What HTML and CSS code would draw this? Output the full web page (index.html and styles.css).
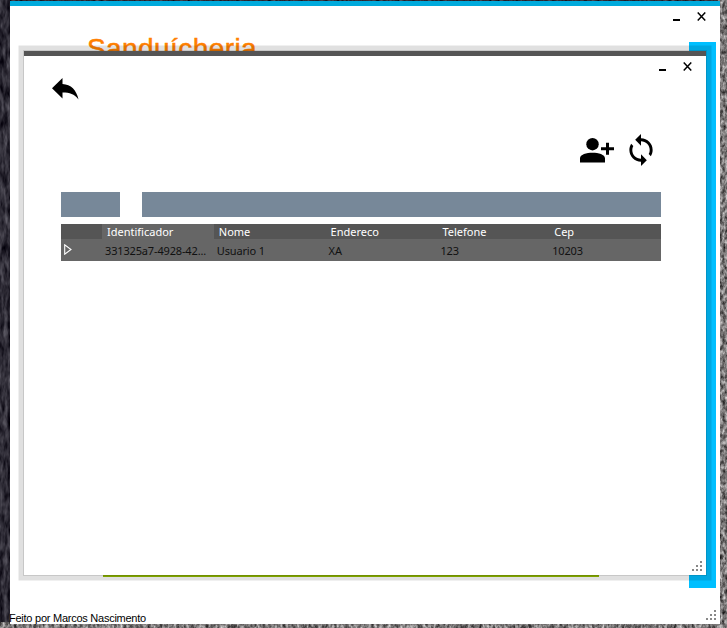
FILE: index.html
```html
<!DOCTYPE html>
<html lang="pt-BR">
<head>
<meta charset="utf-8">
<title>Sanduícheria</title>
<link rel="stylesheet" href="styles.css">
</head>
<body>
<svg class="wallpaper" width="727" height="628" aria-hidden="true">
  <defs>
    <filter id="fur" x="0" y="0" width="100%" height="100%" color-interpolation-filters="sRGB">
      <feTurbulence type="fractalNoise" baseFrequency="0.35 0.2" numOctaves="3" seed="8"/>
      <feColorMatrix values="1 0 0 0 -.02  1 0 0 0 -.03  1 0 0 0 -.03  0 0 0 0 1"/>
    </filter>
    <filter id="dark" x="0" y="0" width="100%" height="100%" color-interpolation-filters="sRGB">
      <feTurbulence type="fractalNoise" baseFrequency="0.25 0.07" numOctaves="3" seed="4"/>
      <feColorMatrix values=".5 0 0 0 -.07  .5 0 0 0 -.08  .5 0 0 0 -.04  0 0 0 0 1"/>
    </filter>
  </defs>
  <rect width="727" height="628" fill="#33323b"/>
  <rect width="12" height="628" filter="url(#dark)"/>
  <rect width="727" height="2" filter="url(#dark)"/>
  <rect x="718" width="9" height="628" filter="url(#fur)"/>
  <rect y="622" width="727" height="6" filter="url(#fur)"/>
</svg>

<main class="window main-window">
  <div class="controls"><i class="minimize"></i><svg class="close" viewBox="0 0 10 10"><path d="M.8.5 9.2 9.5M9.2.5.8 9.5"/></svg></div>
  <h1>Sanduícheria</h1>
  <div class="accent-side"></div>
  <div class="accent-bottom"></div>
  <footer>Feito por Marcos Nascimento</footer>
  <svg class="grip" viewBox="0 0 10 10"><path d="M8 0h2v2H8zM4 4h2v2H4zM8 4h2v2H8zM0 8h2v2H0zM4 8h2v2H4zM8 8h2v2H8z"/></svg>
</main>

<section class="window dialog">
  <div class="controls"><i class="minimize"></i><svg class="close" viewBox="0 0 10 10"><path d="M.8.5 9.2 9.5M9.2.5.8 9.5"/></svg></div>
  <svg class="back" viewBox="0 0 27 22"><path d="M10.5 0v6C19 6.4 24.5 12 26.5 21.5 22 16 18 14.5 10.5 14.5v6L0 10.3z"/></svg>
  <div class="toolbar">
    <svg class="add-user" viewBox="0 0 34 25"><circle cx="12.5" cy="6.2" r="6.2"/><path d="M0 24.5V20.5C0 16.5 6.5 14.8 12.5 14.8S25 16.5 25 20.5v4zM26 4.7h3v4.6h5v3h-5v4.5h-3v-4.5h-5v-3h5z"/></svg>
    <svg class="sync" viewBox="1 1 22 22" preserveAspectRatio="none"><path d="M12 4V1L8 5l4 4V6c3.31 0 6 2.69 6 6 0 1.01-.25 1.97-.7 2.8l1.46 1.46C19.54 15.03 20 13.57 20 12c0-4.42-3.58-8-8-8zm0 14c-3.31 0-6-2.69-6-6 0-1.01.25-1.97.7-2.8L5.24 7.74C4.46 8.97 4 10.43 4 12c0 4.42 3.58 8 8 8v3l4-4-4-4v3z"/></svg>
  </div>
  <div class="filters"><div></div><div></div></div>
  <table>
    <thead><tr><th></th><th class="sorted">Identificador</th><th>Nome</th><th>Endereco</th><th>Telefone</th><th>Cep</th></tr></thead>
    <tbody><tr><td class="marker"><svg viewBox="0 0 8 11"><path d="M.7.8v9.4L7 5.5z"/></svg></td><td>331325a7-4928-42...</td><td>Usuario 1</td><td>XA</td><td>123</td><td>10203</td></tr></tbody>
  </table>
  <svg class="grip" viewBox="0 0 10 10"><path d="M8 0h2v2H8zM4 4h2v2H4zM8 4h2v2H8zM0 8h2v2H0zM4 8h2v2H4zM8 8h2v2H8z"/></svg>
</section>
</body>
</html>
```
FILE: styles.css
```css
* { box-sizing: border-box; }
html, body { margin: 0; width: 727px; height: 628px; overflow: hidden; }
body { position: relative; font-family: "Noto Sans", "Open Sans", sans-serif; }
svg { display: block; }
.wallpaper { position: absolute; inset: 0; }
.window { position: absolute; background: #fff; }
.main-window { left: 10px; top: 1px; width: 710px; height: 623px; border-top: 5px solid #00aadc; }
.dialog {
  left: 24px; top: 51px; width: 682px; height: 524px;
  border-top: 5px solid #555;
  box-shadow: 0 0 0 1px rgba(0,0,0,.11), 0 0 0 5.5px rgba(0,0,0,.12);
}
.controls { display: flex; justify-content: flex-end; gap: 17px; padding: 6px 14px 0 0; height: 17px; }
.minimize { width: 7px; height: 2px; margin-top: 7px; background: #000; }
.close { width: 9px; height: 9px; fill: none; stroke: #000; stroke-width: 1.6; }
h1 {
  margin: 10px 0 0 77px; font: 400 28px/32px "Liberation Sans", sans-serif;
  color: #ff8000; -webkit-text-stroke: .5px #ff8000; letter-spacing: .42px; white-space: nowrap;
}
.accent-side { position: absolute; left: 679px; top: 36px; width: 27px; height: 546px; background: #00bfff; }
.accent-bottom { position: absolute; left: 93px; top: 569px; width: 496px; height: 2px; background: #90b800; }
footer {
  position: absolute; left: -1px; bottom: -1px; font: 11px/13px "Liberation Sans", sans-serif;
  color: #000; letter-spacing: -.25px; white-space: nowrap;
}
.grip { position: absolute; right: 4px; bottom: 4px; width: 10px; height: 10px; fill: #888; shape-rendering: crispEdges; }
.back { width: 27px; height: 22px; margin: 5px 0 0 28px; }
.toolbar { display: flex; align-items: center; justify-content: flex-end; gap: 11px; margin: 34px 49px 0 0; height: 32px; }
.add-user { width: 34px; height: 25px; }
.sync { width: 32px; height: 32px; }
.filters { display: grid; grid-template-columns: 59px 519px; gap: 22px; height: 25px; margin: 26px 0 0 37px; }
.filters div { background: #778899; }
table { width: 600px; margin: 7px 0 0 37px; border-collapse: collapse; table-layout: fixed; font-size: 11px; line-height: 15px; }
th, td { padding: 0; text-align: left; white-space: nowrap; font-weight: 400; }
th { height: 15px; padding-left: 5px; background: #555; color: #fff; }
th:first-child { width: 41px; }
.sorted { background: #666; }
td { height: 22px; padding: 0 0 0 3px; background: #666; color: #111; letter-spacing: -.15px; }
.marker svg { width: 8px; height: 11px; margin-top: -2px; fill: none; stroke: #fff; stroke-width: 1.1; }
```
